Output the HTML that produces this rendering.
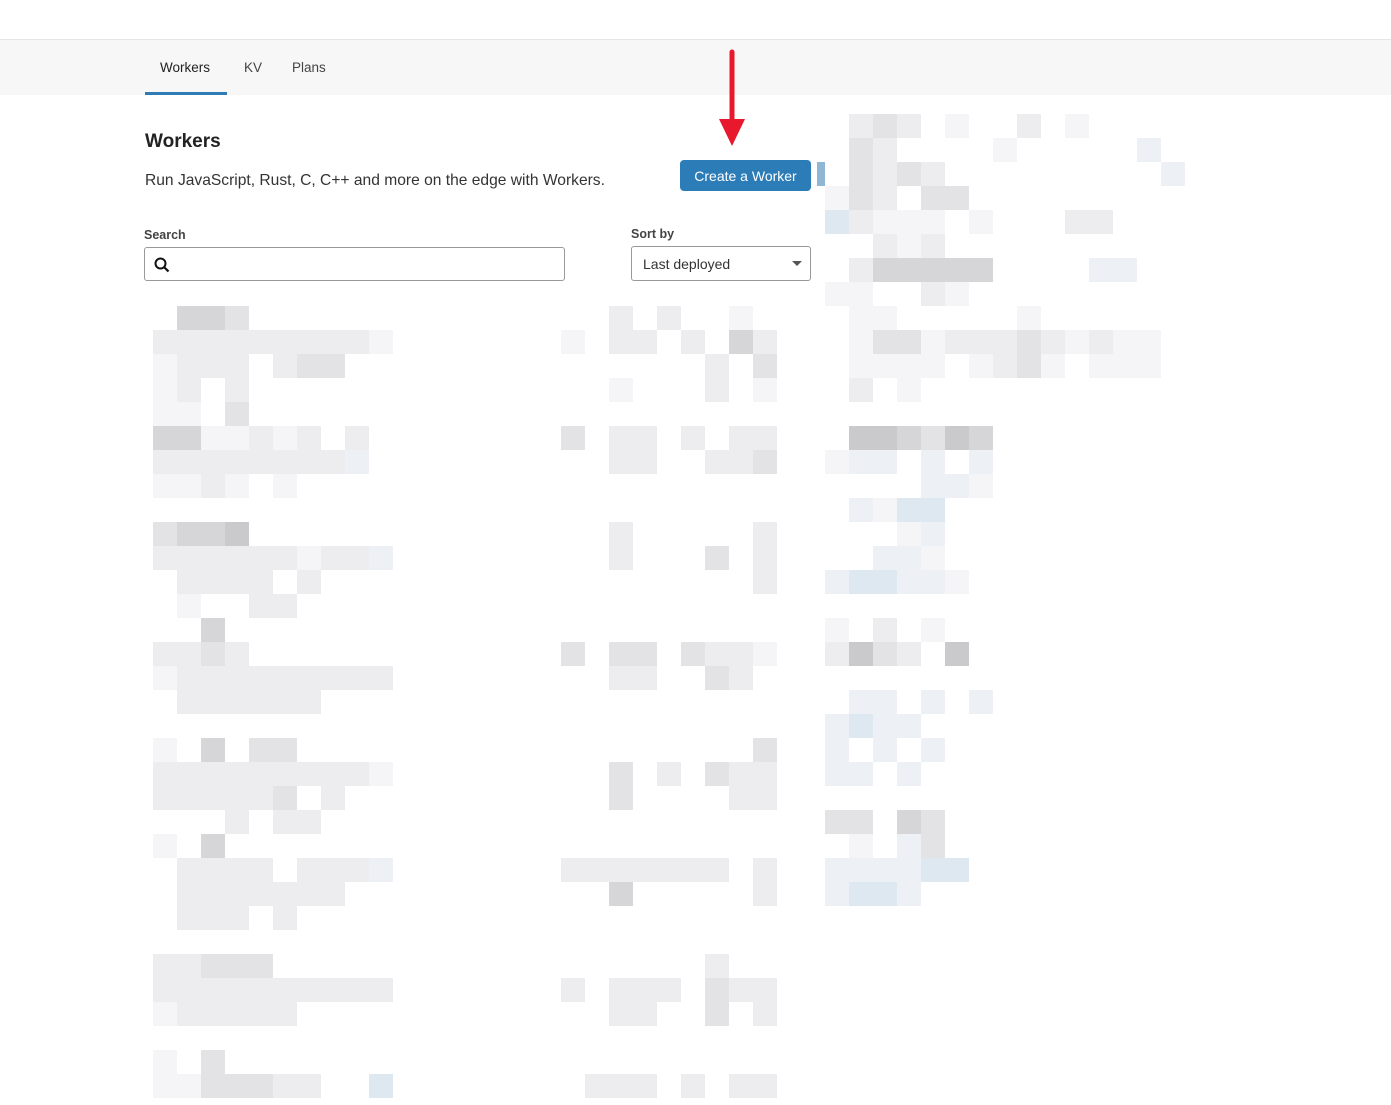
<!DOCTYPE html>
<html><head><meta charset="utf-8">
<style>
body{margin:0;width:1391px;height:1105px;background:#fff;position:relative;overflow:hidden;font-family:"Liberation Sans",sans-serif;color:#222}
.nav{position:absolute;left:0;top:39px;width:1391px;height:55px;background:#f7f7f7;border-top:1px solid #e6e6e6}
.tab{position:absolute;top:20px;font-size:13.5px;color:#444}
.ul{position:absolute;left:145px;top:92px;width:82px;height:3px;background:#2f7bb6}
h1{position:absolute;left:145px;top:131px;margin:0;font-size:19px;font-weight:bold;color:#222}
.desc{position:absolute;left:145px;top:172px;font-size:15.6px;color:#333}
.btn{position:absolute;left:680px;top:160px;width:131px;height:31px;background:#2c7cb8;border-radius:4px;color:#fff;font-size:14px;line-height:32px;text-align:center}
.bar{position:absolute;left:817px;top:162px;width:8px;height:24px;background:#8fb6d3}
.lbl{position:absolute;font-size:12.5px;color:#444;font-weight:bold}
.in{position:absolute;border:1px solid #999;border-radius:3px;background:#fff}
.c{position:absolute;width:24px;height:24px}
</style></head><body>
<div class="nav">
<span class="tab" style="left:160px;color:#222">Workers</span>
<span class="tab" style="left:244px">KV</span>
<span class="tab" style="left:292px">Plans</span>
</div>
<div class="ul"></div>
<h1>Workers</h1>
<div class="desc">Run JavaScript, Rust, C, C++ and more on the edge with Workers.</div>
<div class="btn">Create a Worker</div>
<div class="bar"></div>
<div class="lbl" style="left:144px;top:228px">Search</div>
<div class="in" style="left:144px;top:247px;width:419px;height:32px">
<svg width="16" height="16" style="position:absolute;left:9px;top:9px" viewBox="0 0 16 16"><circle cx="6.5" cy="6.5" r="5" fill="none" stroke="#111" stroke-width="2"/><line x1="10" y1="10" x2="14.5" y2="14.5" stroke="#111" stroke-width="2.2"/></svg>
</div>
<div class="lbl" style="left:631px;top:227px">Sort by</div>
<div class="in" style="left:631px;top:246px;width:178px;height:33px">
<span style="position:absolute;left:11px;top:9px;font-size:14px;color:#333">Last deployed</span>
<div style="position:absolute;right:8px;top:14px;border-left:5px solid transparent;border-right:5px solid transparent;border-top:5px solid #555"></div>
</div>
<svg width="40" height="110" style="position:absolute;left:712px;top:45px" viewBox="0 0 40 110"><line x1="20" y1="7" x2="20" y2="78" stroke="#e8192c" stroke-width="5" stroke-linecap="round"/><polygon points="7,74 33,74 20,101" fill="#e8192c"/></svg>
<div id="g"></div>
<script>
var col={'1':'#f5f5f7','2':'#ededef','3':'#e3e3e6','4':'#d6d6d9','5':'#cacacd','b':'#edf1f6','B':'#dde8f0'};
function put(x0,rows){var h='';for(var y in rows){var r=rows[y];for(var i=0;i<r.length;i++){var c=col[r[i]];if(c)h+='<div class="c" style="left:'+(x0+24*i)+'px;top:'+y+'px;background:'+c+'"></div>';}}document.getElementById('g').innerHTML+=h;}
put(153,{306:'.443......',330:'2222222221',354:'1222.233..',378:'12.2......',402:'11.3......',426:'4411212.2.',450:'22222222b.',474:'1121.1....',522:'3445......',546:'222222122b',570:'.2222.2...',594:'.1..22....',618:'..4.......',642:'2232......',666:'1222222222',690:'.222222...',738:'1.4.33....',762:'2222222221',786:'222223.2..',810:'...2.22...',834:'1.4.......',858:'.2222.222b',882:'.2222222..',906:'.222.2....',954:'22333.....',978:'2222222222',1002:'122222....',1050:'1.3.......',1074:'1133322..B'});
put(561,{306:'..2.2..1..',330:'1.22.2.42.',354:'......2.3.',378:'..1...2.1.',426:'3.22.2.22.',450:'..22..223.',522:'..2.....2.',546:'..2...3.2.',570:'........2.',642:'3.33.3221.',666:'..22..32..',738:'........3.',762:'..3.2.322.',786:'..3....22.',858:'2222222.2.',882:'..4.....2.',954:'......2...',978:'2.222.322.',1002:'..22..3.2.',1074:'.222.2.22.'});
put(825,{114:'.232.1..2.1....',138:'.32....1.....b.',162:'.3232.........b',186:'132.33.........',210:'B2111.1...22...',234:'..212..........',258:'.244444....bb..',282:'11..21.........',306:'.11.....1......',330:'.1331222321211.',354:'.1111.1231.111.',378:'.2.1...........',426:'.554354........',450:'1bb.b.b........',474:'....bb1........',498:'.b1BB..........',522:'...1b..........',546:'..bb1..........',570:'bBBbb1.........',618:'1.2.1..........',642:'2532.5.........',690:'.bb.b.b........',714:'bBbb...........',738:'b.b.b..........',762:'bb.b...........',810:'33.43..........',834:'.1.b3..........',858:'bbbbBB.........',882:'bBBb...........'});
</script>
</body></html>
